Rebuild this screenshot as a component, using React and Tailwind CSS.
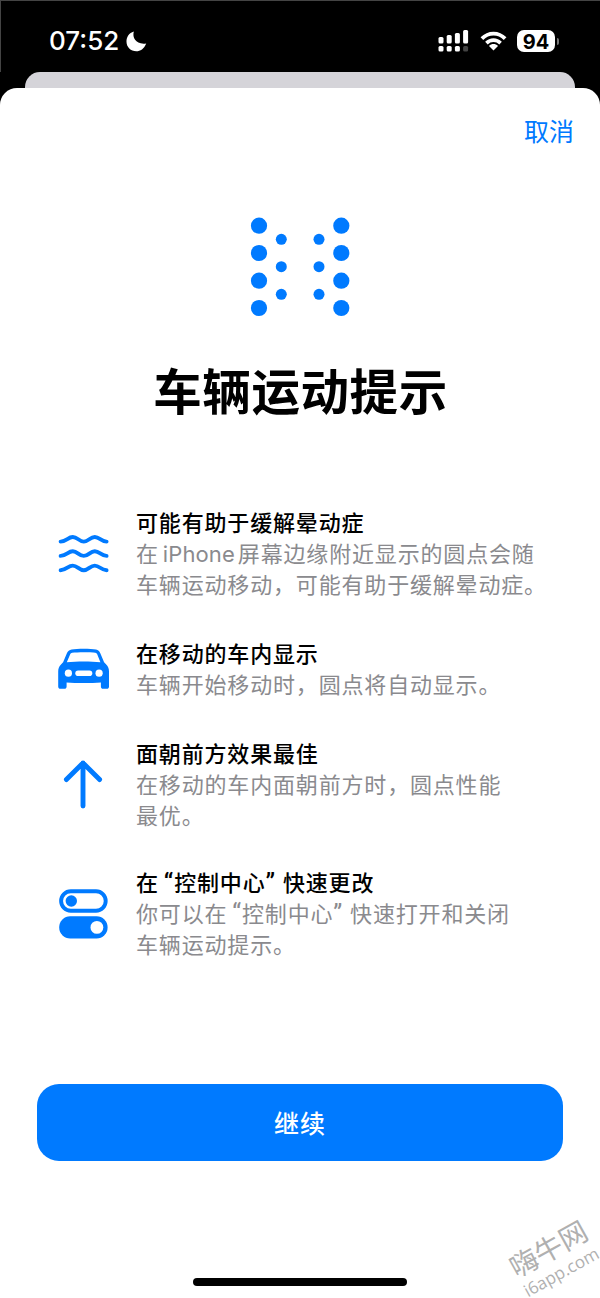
import React from "react"

function StatusBar() {
  return (
    <div className="flex h-[72px] items-start justify-between border-t border-l border-[#444] pt-[26px] pr-[41px] pl-[48px] text-white">
      <div className="flex h-7 items-center gap-[7px]">
        <span className="text-[26px] leading-7 font-medium">07:52</span>
        <svg className="h-[21px] w-[21px]" viewBox="0 0 22 22" fill="currentColor">
          <path d="M8.2 0.6C6.2 7.6 11 14.6 21.2 13C19 18.5 15 21.2 10.8 21.2C5 21.2 0.5 16.9 0.5 11C0.5 6.2 3.2 2.2 8.2 0.6Z" />
        </svg>
      </div>
      <div className="flex h-7 items-center">
        <svg className="mr-[11px] h-[22px] w-[31px]" viewBox="0 0 31 22" fill="currentColor">
          <rect x="0.5" y="7" width="5" height="6.5" rx="1.5" />
          <rect x="8.7" y="5" width="5" height="8.5" rx="1.5" />
          <rect x="16.9" y="3" width="5" height="10.5" rx="1.5" />
          <rect x="25.1" y="0" width="5" height="13.5" rx="1.5" />
          <rect x="0.5" y="16" width="5" height="5.5" rx="1.5" />
          <rect x="8.7" y="16" width="5" height="5.5" rx="1.5" />
          <rect x="16.9" y="16" width="5" height="5.5" rx="1.5" />
          <rect x="25.1" y="16" width="5" height="5.5" rx="1.5" fill="#444" />
        </svg>
        <svg className="mr-[10px] h-[20px] w-[27px]" viewBox="0 0 27 20" fill="none" stroke="currentColor">
          <path d="M1.9 7.6C8.5 0.9 18.5 0.9 25.1 7.6" strokeWidth="3.8" />
          <path d="M6.4 12.1C10.5 8.1 16.5 8.1 20.6 12.1" strokeWidth="3.6" />
          <path d="M13.5 19.4L9 14.9C11.6 12.5 15.4 12.5 18 14.9Z" fill="currentColor" stroke="none" />
        </svg>
        <div className="flex h-[22px] w-[38px] items-center justify-center rounded-[7px] bg-white pt-px text-[20px] leading-none font-bold text-black">
          94
        </div>
        <div className="ml-[2px] h-[7px] w-[2px] rounded-r bg-[#777]" />
      </div>
    </div>
  )
}

function MotionDots() {
  const big = [8.7, 36, 63.7, 91]
  const small = [22.3, 49.7, 77.3]
  return (
    <svg className="h-[100px] w-[100px]" viewBox="0 0 100 100" fill="#007aff">
      {big.map((y) => (
        <g key={y}>
          <circle cx="9" cy={y} r="8.1" />
          <circle cx="91.3" cy={y} r="8.1" />
        </g>
      ))}
      {small.map((y) => (
        <g key={y}>
          <circle cx="31.3" cy={y} r="5.5" />
          <circle cx="69" cy={y} r="5.5" />
        </g>
      ))}
    </svg>
  )
}

function WavesIcon() {
  return (
    <svg className="h-[52px] w-[52px]" viewBox="0 0 52 52" fill="none" stroke="#007aff" strokeWidth="3.9" strokeLinecap="round">
      <path d="M2.6 13.6C8.5 13.6 10 9 14.8 9C19.5 9 21 13.6 25.8 13.6C30.6 13.6 32 9 36.8 9C41.6 9 43 13.6 48.6 13.6" />
      <path d="M2.6 27.9C8.5 27.9 10 23.3 14.8 23.3C19.5 23.3 21 27.9 25.8 27.9C30.6 27.9 32 23.3 36.8 23.3C41.6 23.3 43 27.9 48.6 27.9" />
      <path d="M2.6 42.2C8.5 42.2 10 37.6 14.8 37.6C19.5 37.6 21 42.2 25.8 42.2C30.6 42.2 32 37.6 36.8 37.6C41.6 37.6 43 42.2 48.6 42.2" />
    </svg>
  )
}

function CarIcon() {
  return (
    <svg className="h-[52px] w-[52px]" viewBox="0 0 52 52" fill="#007aff">
      <path
        fillRule="evenodd"
        d="M13.6 6.6C19 5.6 32.6 5.6 38 6.6C40.2 7 41.4 8.2 42.2 10L46.1 19.2L48.2 21.5C50.2 23.7 51 25.5 51 28.5V43.5C51 45 50.1 45.8 48.8 45.8H45.1C43.8 45.8 42.9 45 42.9 43.5V39.4C33 40.1 18.5 40.1 8.6 39.4V43.5C8.6 45 7.7 45.8 6.4 45.8H2.4C1.1 45.8 0.2 45 0.2 43.5V28.5C0.2 25.5 1 23.7 3 21.5L5.1 19.2L9 10C9.8 8.2 11.4 7 13.6 6.6ZM14.2 9.8C13.2 10 12.6 10.4 12.2 11.3L8.8 19.2C19 18.2 32.6 18.2 42.4 19.2L39.2 11.3C38.8 10.4 38.3 10 37.3 9.8C33 9 19 9 14.2 9.8Z"
      />
      <circle cx="10.4" cy="30.2" r="3.6" fill="#fff" />
      <circle cx="41.1" cy="30.2" r="3.6" fill="#fff" />
      <rect x="17.3" y="27.4" width="17" height="5.6" rx="2.8" fill="#fff" />
    </svg>
  )
}

function ArrowIcon() {
  return (
    <svg className="h-[52px] w-[52px]" viewBox="0 0 52 52" fill="none" stroke="#007aff" strokeWidth="4.9" strokeLinecap="round" strokeLinejoin="round">
      <path d="M25 4V47M8.4 20.6L25 4L41.6 20.6" />
    </svg>
  )
}

function SwitchesIcon() {
  return (
    <svg className="h-[52px] w-[52px]" viewBox="0 0 52 52" fill="#007aff">
      <rect x="3.1" y="3.3" width="44.6" height="19.4" rx="9.7" fill="none" stroke="#007aff" strokeWidth="3.9" />
      <circle cx="13.3" cy="13" r="5.7" />
      <rect x="1.2" y="28.3" width="48.4" height="22.1" rx="11" />
      <circle cx="38.9" cy="39.4" r="6.4" fill="#fff" />
    </svg>
  )
}

// latin quote glyphs, with a bit of space on the outer side
function Quoted({ children }) {
  return (
    <span>
      <span className="ml-[5px] font-['Roboto',sans-serif] text-[25px] leading-none">“</span>
      {children}
      <span className="mr-[7px] font-['Roboto',sans-serif] text-[25px] leading-none">”</span>
    </span>
  )
}

const features = [
  {
    icon: <WavesIcon />,
    title: "可能有助于缓解晕动症",
    lines: [
      <>
        在<span className="mr-[3px] ml-[4px] tracking-[0.1px]">iPhone</span>屏幕边缘附近显示的圆点会随
      </>,
      "车辆运动移动，可能有助于缓解晕动症。",
    ],
  },
  {
    icon: <CarIcon />,
    title: "在移动的车内显示",
    lines: ["车辆开始移动时，圆点将自动显示。"],
  },
  {
    icon: <ArrowIcon />,
    title: "面朝前方效果最佳",
    lines: ["在移动的车内面朝前方时，圆点性能", "最优。"],
  },
  {
    icon: <SwitchesIcon />,
    title: (
      <>
        在<Quoted>控制中心</Quoted>快速更改
      </>
    ),
    lines: [
      <>
        你可以在<Quoted>控制中心</Quoted>快速打开和关闭
      </>,
      "车辆运动提示。",
    ],
  },
]

function Feature({ icon, title, lines }) {
  return (
    <li className="flex items-center gap-[26px] last:-mt-[2px]">
      <div className="pb-[2px]">{icon}</div>
      <div className="text-[22px] leading-[31px] tracking-[0.83px] whitespace-nowrap">
        <h2 className="h-[31px] font-medium text-black">{title}</h2>
        {lines.map((line, i) => (
          <p key={i} className="h-[31px] text-[#8a8a8e]">
            {line}
          </p>
        ))}
      </div>
    </li>
  )
}

function App() {
  return (
    <div
      lang="zh-CN"
      className="relative flex h-[1298px] w-[600px] flex-col overflow-hidden bg-black font-['Inter','Noto_Sans_CJK_SC',sans-serif]"
    >
      <StatusBar />
      <div className="mx-[25px] h-4 shrink-0 rounded-t-[15px] bg-[#d5d4d9]" />
      <main className="flex flex-1 flex-col items-center rounded-t-[17px] bg-white">
        <button className="mt-[26px] mr-[26px] self-end text-[25px] leading-[36px] text-[#007aff]">取消</button>
        <div className="mt-[67px]">
          <MotionDots />
        </div>
        <h1 className="mt-[41px] pl-[1px] text-[48.5px] leading-[70px] font-bold tracking-[0.6px] text-black">
          车辆运动提示
        </h1>
        <ul className="mt-[80px] flex w-full flex-col gap-[38px] pl-[58px]">
          {features.map((f, i) => (
            <Feature key={i} {...f} />
          ))}
        </ul>
        <button className="mt-[123px] h-[77px] w-[526px] rounded-[22px] bg-[#007aff] pt-[4px] text-[25px] font-medium tracking-[1px] text-white">
          继续
        </button>
        <div className="mt-[117px] h-2 w-[214px] rounded-full bg-black" />
      </main>

      <div className="absolute top-[1233px] left-[504px] w-[100px] -rotate-[29deg] text-center text-[#b0b0b0]">
        <div className="text-[28px] leading-[30px]">嗨牛网</div>
        <div className="font-['Open_Sans',sans-serif] text-[17px] leading-[22px]">i6app.com</div>
      </div>
    </div>
  )
}

export default App
